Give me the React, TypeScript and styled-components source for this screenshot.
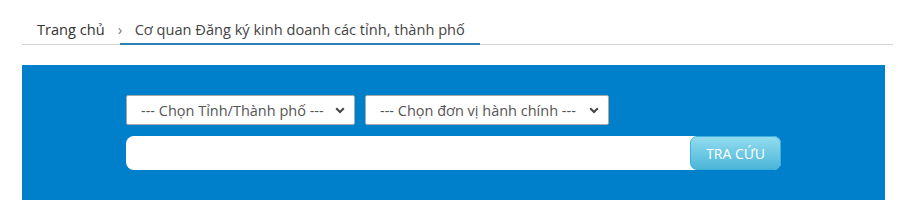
import React from "react";
import styled, { createGlobalStyle } from "styled-components";

const Global = createGlobalStyle`
  html, body { margin: 0; padding: 0; background: #fff; }
  body { font-family: "Open Sans", "Noto Sans", sans-serif; }
  * { box-sizing: border-box; }
`;

const Page = styled.div`
  padding: 0 5px 19px 22px;
  width: 898px;
`;

const Crumbs = styled.ul`
  list-style: none;
  margin: 0;
  padding: 0;
  display: flex;
  border-bottom: 1px solid #d3d3d3;
`;

const Crumb = styled.li<{ $active?: boolean; $sep?: boolean }>`
  position: relative;
  padding: 18px 15px 0 15px;
  height: 45px;
  font-size: 14.6px;
  line-height: 22px;
  color: ${(p) => (p.$active ? "#444" : "#333")};
  border-bottom: 2px solid ${(p) => (p.$active ? "#2f80b8" : "transparent")};
  margin-bottom: -1px;
  ${(p) =>
    p.$sep
      ? `&::before {
          content: "›";
          position: absolute;
          left: -2px;
          top: 18px;
          font-size: 15px;
          color: #777;
        }`
      : ""}
`;

const Panel = styled.div`
  margin-top: 20px;
  width: 863px;
  background: #0080cb;
  padding: 30px 0;
  display: flex;
  justify-content: center;
`;

const Form = styled.div`
  width: 655px;
  display: flex;
  flex-direction: column;
  gap: 11px;
`;

const SelectRow = styled.div`
  display: flex;
  gap: 10px;
`;

const Select = styled.select<{ $w: number }>`
  appearance: none;
  -webkit-appearance: none;
  width: ${(p) => p.$w}px;
  height: 30px;
  border: 1px solid #a9a9a9;
  border-radius: 2px;
  background: #fff
    url("data:image/svg+xml;utf8,<svg xmlns='http://www.w3.org/2000/svg' width='10' height='7' viewBox='0 0 10 7'><path d='M1.2 1.3 L5 5 L8.8 1.3' fill='none' stroke='%23444' stroke-width='2'/></svg>")
    no-repeat right 9px center;
  padding: 1px 24px 0 14px;
  font-family: "Open Sans", "Noto Sans", sans-serif;
  font-size: 14.5px;
  color: #555;
  outline: none;
`;

const SearchRow = styled.div`
  display: flex;
  height: 34px;
  background: #fff;
  border-radius: 8px;
`;

const Input = styled.input`
  flex: 1;
  border: none;
  background: transparent;
  outline: none;
  padding: 0 12px;
  font-family: "Open Sans", "Noto Sans", sans-serif;
  font-size: 14px;
`;

const Button = styled.button`
  width: 91px;
  height: 34px;
  border: 1px solid #3cb0dc;
  border-radius: 7px;
  background: linear-gradient(to bottom, #92dcef, #4cb6d8);
  color: #fff;
  font-family: "Open Sans", "Noto Sans", sans-serif;
  font-size: 14px;
  text-transform: uppercase;
  padding: 0;
  cursor: pointer;
`;

export default function App() {
  return (
    <>
      <Global />
      <Page>
        <Crumbs>
          <Crumb>Trang chủ</Crumb>
          <Crumb $active $sep>
            Cơ quan Đăng ký kinh doanh các tỉnh, thành phố
          </Crumb>
        </Crumbs>
        <Panel>
          <Form>
            <SelectRow>
              <Select $w={229} defaultValue="">
                <option value="">--- Chọn Tỉnh/Thành phố ---</option>
              </Select>
              <Select $w={244} defaultValue="">
                <option value="">--- Chọn đơn vị hành chính ---</option>
              </Select>
            </SelectRow>
            <SearchRow>
              <Input />
              <Button>Tra cứu</Button>
            </SearchRow>
          </Form>
        </Panel>
      </Page>
    </>
  );
}
